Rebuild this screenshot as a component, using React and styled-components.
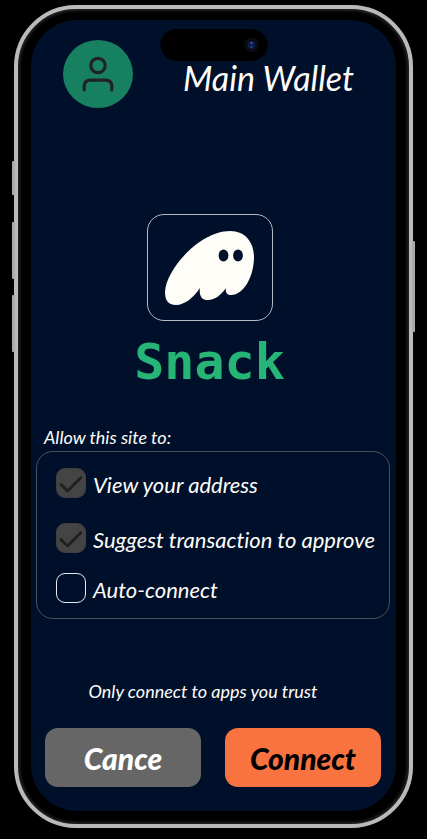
import React from "react";
import styled, { createGlobalStyle } from "styled-components";

const GlobalStyle = createGlobalStyle`
  *, *::before, *::after { box-sizing: border-box; }
  body {
    margin: 0;
    background: #000;
    color: #fffdf8;
    font-family: Lato, "Open Sans", sans-serif;
    font-style: italic;
    font-variant-ligatures: none;
  }
`;

const Page = styled.div`
  min-height: 100vh;
  display: flex;
  padding: 5px 14px 11px;
  background: #000;
`;

const Phone = styled.div`
  position: relative;
  flex: 1;
  min-width: 0;
  display: flex;
  padding: 11px 13px 13px;
  border: 4px solid #bab9bb;
  border-radius: 62px;
  background: #000;
  box-shadow: inset 0 0 3px 2px #242424, 0 0 1px #3b3b3b;
`;

const SideKey = styled.span`
  position: absolute;
  top: ${(p) => p.$top}px;
  ${(p) => p.$side}: -6px;
  width: 3px;
  height: ${(p) => p.$length}px;
  border-radius: 1px;
  background: #aaa9ab;
`;

const Screen = styled.main`
  flex: 1;
  min-width: 0;
  display: flex;
  flex-direction: column;
  padding: 20px 6px 23px 5px;
  border-radius: 46px;
  background: #00102b;
`;

const Island = styled.div`
  position: absolute;
  top: 20px;
  left: 50%;
  width: 107px;
  height: 32px;
  display: flex;
  align-items: center;
  justify-content: flex-end;
  padding-right: 8px;
  border-radius: 16px;
  background: #000;
  transform: translateX(-50%);
`;

const Header = styled.header`
  display: flex;
  align-items: center;
  gap: 50px;
  padding-left: 27px;
`;

const Avatar = styled.button`
  flex: none;
  width: 70px;
  height: 68px;
  display: grid;
  place-items: center;
  padding: 0;
  border: 0;
  border-radius: 50%;
  background: #178060;
`;

const Title = styled.h1`
  margin: 8px 0 0;
  font-size: 34px;
  line-height: 40px;
  font-weight: 400;
  white-space: nowrap;
`;

const Brand = styled.section`
  display: flex;
  flex-direction: column;
  align-items: center;
  margin-top: 106px;
  padding-right: 7px;
`;

const LogoCard = styled.div`
  width: 126px;
  height: 107px;
  border: 1px solid #b5bac3;
  border-radius: 17px;

  svg { display: block; }
`;

const BrandName = styled.h2`
  margin: 11px 0 0;
  color: #26b577;
  font: 700 50px/60px "DejaVu Sans Mono", monospace;
`;

const Permissions = styled.fieldset`
  min-width: 0;
  margin: 35px 0 0;
  padding: 0;
  border: 0;
`;

const Legend = styled.legend`
  padding: 0 0 4px 8px;
  font-size: 18px;
  line-height: 20px;
`;

const PermissionList = styled.div`
  display: flex;
  flex-direction: column;
  padding: 16px 8px 15px 19px;
  border: 1px solid #4c5058;
  border-radius: 17px;
`;

const PermissionRow = styled.label`
  display: flex;
  align-items: center;
  gap: 7px;
  margin-top: ${(p) => p.$space || 0}px;
  font-size: 22px;
  line-height: 30px;
  white-space: nowrap;
`;

const PermissionText = styled.span`
  height: 30px;
  padding-top: 2px;
`;

const CheckWrap = styled.span`
  flex: none;
  display: grid;
  width: 30px;
  height: 30px;

  > * { grid-area: 1 / 1; }
  svg { pointer-events: none; visibility: hidden; }
  input:checked + svg { visibility: visible; }
`;

const CheckInput = styled.input`
  appearance: none;
  width: 30px;
  height: 30px;
  margin: 0;
  border: 1px solid #e8ebee;
  border-radius: 9px;
  background: transparent;

  &:checked {
    border-color: #3d3f43;
    background: #444;
  }
`;

const Notice = styled.p`
  margin: 62px 0 0;
  padding-right: 20px;
  font-size: 18px;
  line-height: 20px;
  text-align: center;
`;

const Actions = styled.div`
  display: grid;
  grid-template-columns: 1fr 1fr;
  gap: 24px;
  margin-top: 27px;
  padding: 0 9px;
`;

const ActionButton = styled.button`
  height: 59px;
  padding: 0;
  border: 0;
  border-radius: 13px;
  background: ${(p) => (p.$primary ? "#f97341" : "#666")};
  color: ${(p) => (p.$primary ? "#000" : "#fff")};
  font: italic 900 30px/32px Lato, "Open Sans", sans-serif;
`;

function Check({ checked }) {
  return (
    <CheckWrap>
      <CheckInput type="checkbox" defaultChecked={checked} />
      <svg width="30" height="30" viewBox="0 0 30 30" fill="none" aria-hidden="true">
        <path d="M5 16.5 11.5 23 25 9.5" stroke="#202020" strokeWidth="2.8" strokeLinecap="round" strokeLinejoin="round" />
      </svg>
    </CheckWrap>
  );
}

const permissions = [
  { label: "View your address", checked: true },
  { label: "Suggest transaction to approve", checked: true, space: 25 },
  { label: "Auto-connect", checked: false, space: 20 },
];

export default function App() {
  return (
    <>
      <GlobalStyle />
      <Page>
        <Phone>
          <SideKey $side="left" $top={152} $length={34} />
          <SideKey $side="left" $top={213} $length={57} />
          <SideKey $side="left" $top={286} $length={57} />
          <SideKey $side="right" $top={232} $length={91} />
          <Screen>
            <Header>
              <Avatar type="button" aria-label="Account">
                <svg width="32" height="36" viewBox="0 0 32 36" fill="none" stroke="#222" strokeWidth="3.2" strokeLinecap="round">
                  <circle cx="16" cy="9.5" r="7.2" />
                  <path d="M2.2 34V30.5C2.2 26.5 4.5 24.2 8.5 24.2H23.5C27.5 24.2 29.8 26.5 29.8 30.5V34" />
                </svg>
              </Avatar>
              <Title>Main Wallet</Title>
            </Header>
            <Brand>
              <LogoCard>
                <svg width="124" height="105" viewBox="0 0 124 105" role="img" aria-label="Ghost logo">
                  <path
                    d="M17 77C18 54 52 16 82 16C98 16 106 28 106 42C106 61 96 80 83 80C79 80 77 77 78 73C73 80 67 85 60 85C53 85 51 80 52 73C46 82 37 90 28 90C20 90 17 85 17 77Z"
                    fill="#fffdf8"
                  />
                  <ellipse cx="75.5" cy="40.5" rx="4.9" ry="6.1" fill="#00102b" />
                  <ellipse cx="90" cy="40.5" rx="4.9" ry="6.1" fill="#00102b" />
                </svg>
              </LogoCard>
              <BrandName>Snack</BrandName>
            </Brand>
            <Permissions>
              <Legend>Allow this site to:</Legend>
              <PermissionList>
                {permissions.map((item) => (
                  <PermissionRow key={item.label} $space={item.space}>
                    <Check checked={item.checked} />
                    <PermissionText>{item.label}</PermissionText>
                  </PermissionRow>
                ))}
              </PermissionList>
            </Permissions>
            <Notice>Only connect to apps you trust</Notice>
            <Actions>
              <ActionButton type="button">Cance</ActionButton>
              <ActionButton type="button" $primary>Connect</ActionButton>
            </Actions>
          </Screen>
          <Island>
            <svg width="16" height="16" viewBox="0 0 16 16" aria-hidden="true">
              <circle cx="8" cy="8" r="7.5" fill="#090b10" />
              <circle cx="8" cy="8" r="4" fill="#0a1a42" />
              <circle cx="8" cy="6" r="1.3" fill="#334f87" />
              <circle cx="8" cy="10" r="1.2" fill="#23407b" />
            </svg>
          </Island>
        </Phone>
      </Page>
    </>
  );
}
